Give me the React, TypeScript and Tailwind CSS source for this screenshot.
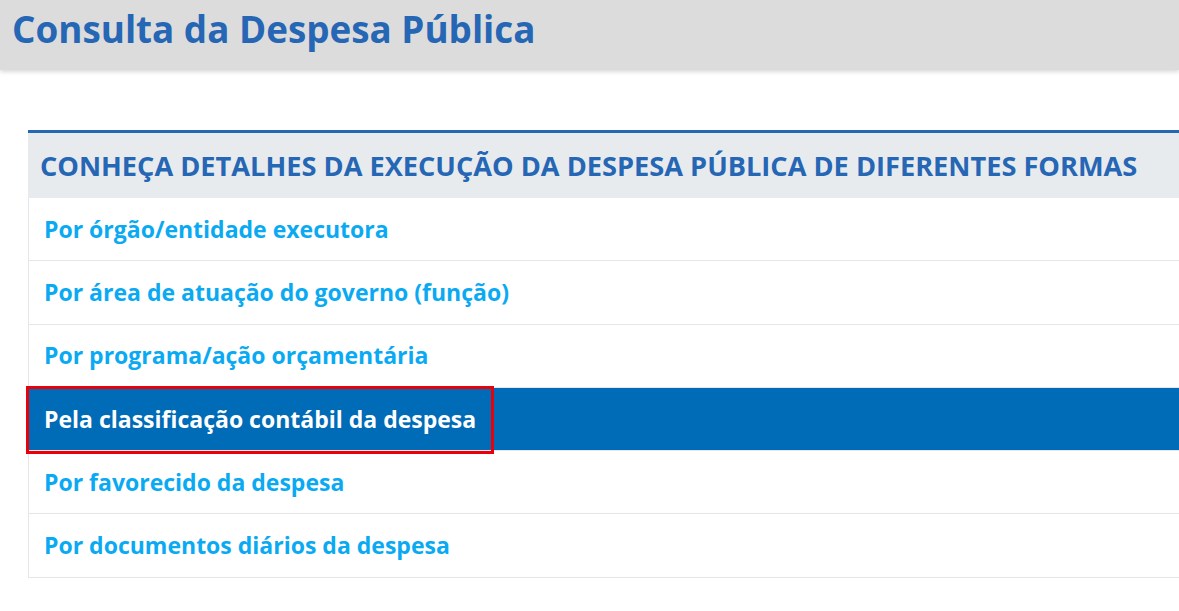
const rows = [
  "Por órgão/entidade executora",
  "Por área de atuação do governo (função)",
  "Por programa/ação orçamentária",
  "Pela classificação contábil da despesa",
  "Por favorecido da despesa",
  "Por documentos diários da despesa",
];

export default function App() {
  return (
    <div className="min-h-[611px] bg-white" style={{ fontFamily: '"Open Sans", sans-serif' }}>
      <header className="h-[70px] bg-[#dcdcdc] shadow-[0_2px_4px_rgba(0,0,0,0.15)] flex items-center pl-3">
        <h1 className="text-[36.8px] font-bold text-[#2566b5] leading-none -mt-[12px]">Consulta da Despesa Pública</h1>
      </header>
      <div className="pt-[60px] pl-7">
        <div className="border-t-[3px] border-[#2566b5] w-[1200px]">
          <div className="h-[65px] bg-[#e8ebee] flex items-center pl-3">
            <h2 className="text-[27.2px] font-bold text-[#2566b5] uppercase leading-none">
              Conheça detalhes da execução da despesa pública de diferentes formas
            </h2>
          </div>
          <ul className="border-l border-[#e6e6e6]">
            {rows.map((r, i) => {
              const active = i === 3;
              return (
                <li
                  key={r}
                  className={`relative h-[63.3px] flex items-center pl-[15px] border-b border-[#e6e6e6] ${active ? "bg-[#006bb6] z-10" : "bg-white"}`}
                >
                  <span className={`text-[23px] font-bold ${active ? "text-white" : "text-[#0aaaf3]"}`}>{r}</span>
                  {active && (
                    <div className="absolute left-[-3px] top-[-2px] w-[468px] h-[68px] border-[3px] border-[#e8000b]" />
                  )}
                </li>
              );
            })}
          </ul>
        </div>
      </div>
    </div>
  );
}
